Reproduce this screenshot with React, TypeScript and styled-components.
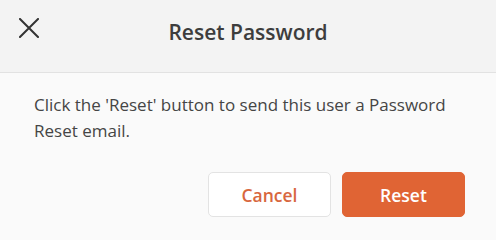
import React from "react";
import styled, { createGlobalStyle } from "styled-components";

const Global = createGlobalStyle`
  html, body { margin: 0; padding: 0; background: #fafafa; }
  body { font-family: "Open Sans", "Noto Sans", sans-serif; -webkit-font-smoothing: antialiased; }
  * { box-sizing: border-box; }
`;

const Dialog = styled.div`
  width: 496px;
  height: 234px;
  background: #fafafa;
  display: flex;
  flex-direction: column;
`;

const Header = styled.header`
  height: 73px;
  background: #f3f3f3;
  border-bottom: 1px solid #e2e2e2;
  display: grid;
  grid-template-columns: 72px 1fr 72px;
  align-items: center;
`;

const CloseButton = styled.button`
  width: 60px;
  height: 56px;
  border: none;
  background: transparent;
  padding: 0 0 0 19px;
  margin-top: -17px;
  display: flex;
  align-items: center;
  cursor: pointer;
  color: #333333;
`;

const Title = styled.h1`
  margin: 0 0 9px;
  text-align: center;
  font-size: 21px;
  font-weight: 600;
  color: #3d3d3d;
  letter-spacing: 0;
`;

const Body = styled.div`
  padding: 19px 34px 0;
  display: flex;
  flex-direction: column;
`;

const Message = styled.p`
  margin: 0;
  font-size: 17px;
  line-height: 26px;
  color: #454545;
`;

const Actions = styled.div`
  display: flex;
  justify-content: flex-end;
  gap: 11px;
  margin-right: -3px;
  margin-top: 28px;
`;

const Button = styled.button<{ $primary?: boolean }>`
  width: 123px;
  height: 45px;
  border-radius: 5px;
  font-family: "Open Sans", "Noto Sans", sans-serif;
  font-size: 17.5px;
  font-weight: 600;
  cursor: pointer;
  border: 1px solid ${(p) => (p.$primary ? "#e06434" : "#e3e3e3")};
  background: ${(p) => (p.$primary ? "#e06434" : "#ffffff")};
  color: ${(p) => (p.$primary ? "#ffffff" : "#d8673e")};
`;

export default function App() {
  return (
    <>
      <Global />
      <Dialog>
        <Header>
          <CloseButton aria-label="Close">
            <svg width="20" height="20" viewBox="0 0 20 20" fill="none">
              <path d="M1 1L19 19M19 1L1 19" stroke="#333" strokeWidth="2" strokeLinecap="square" />
            </svg>
          </CloseButton>
          <Title>Reset Password</Title>
          <span />
        </Header>
        <Body>
          <Message>
            Click the 'Reset' button to send this user a Password Reset email.
          </Message>
          <Actions>
            <Button>Cancel</Button>
            <Button $primary>Reset</Button>
          </Actions>
        </Body>
      </Dialog>
    </>
  );
}
